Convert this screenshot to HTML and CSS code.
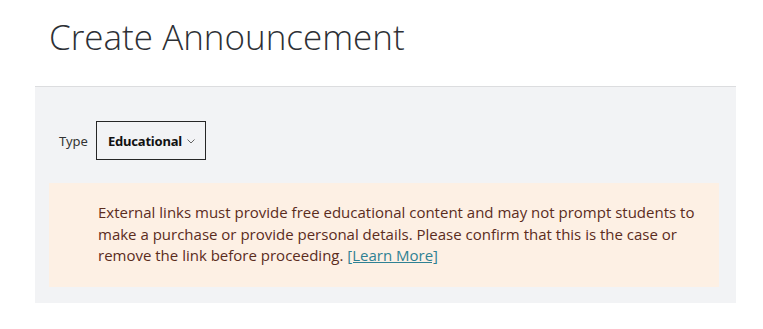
FILE: index.html
```html
<!DOCTYPE html>
<html>
<head>
<meta charset="utf-8">
<link rel="stylesheet" href="styles.css">
</head>
<body>
<h1 class="title">Create Announcement</h1>
<section class="panel">
  <div class="type-row">
    <span class="type-label">Type</span>
    <button class="select">Educational
      <svg class="chev" width="8" height="5" viewBox="0 0 8 5"><path d="M0.5 0.5 L4 4 L7.5 0.5" fill="none" stroke="#555" stroke-width="0.9"/></svg>
    </button>
  </div>
  <div class="notice">
    <p>External links must provide free educational content and may not prompt students to make a purchase or provide personal details. Please confirm that this is the case or remove the link before proceeding. <a href="#">[Learn More]</a></p>
  </div>
</section>
</body>
</html>
```
FILE: styles.css
```css
html, body {
  margin: 0;
  padding: 0;
  background: #ffffff;
}
.title {
  margin: 0;
  padding: 13px 0 0 49px;
  height: 86px;
  box-sizing: border-box;
  font-family: "Open Sans", sans-serif;
  font-weight: 300;
  font-size: 35px;
  line-height: 48px;
  color: #2d3035;
}
.panel {
  margin-left: 35px;
  width: 701px;
  box-sizing: border-box;
  background: #f2f3f5;
  border-top: 1px solid #dcdddf;
  padding: 34px 17px 16px 14px;
}
.type-row {
  display: flex;
  align-items: center;
  gap: 8px;
  padding-left: 10px;
}
.type-label {
  font-family: "Noto Sans", sans-serif;
  font-size: 13px;
  color: #333;
}
.select {
  display: flex;
  align-items: center;
  gap: 5px;
  height: 39px;
  width: 110px;
  box-sizing: border-box;
  padding: 0 0 0 11px;
  background: #f2f3f5;
  border: 1px solid #262626;
  border-radius: 0;
  font-family: "Noto Sans", sans-serif;
  font-weight: 700;
  font-size: 13px;
  letter-spacing: -0.2px;
  color: #111;
}
.chev {
  margin-top: 1px;
}
.notice {
  margin-top: 23px;
  background: #fdf0e4;
  padding: 19px 20px 20px 49px;
}
.notice p {
  margin: 0;
  font-family: "Open Sans", sans-serif;
  font-size: 15px;
  line-height: 21.5px;
  color: #5b2c1d;
}
.notice a {
  color: #2f8193;
  text-decoration: underline;
}
```
